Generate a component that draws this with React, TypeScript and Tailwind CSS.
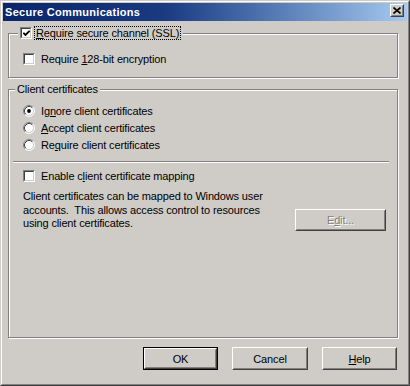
import React from "react";

const face = "font-['Liberation_Sans',Arial,sans-serif] text-[11px] tracking-[-0.15px] leading-[14px] text-black";

function U({ children }: { children: React.ReactNode }) {
  return <span className="underline decoration-1 underline-offset-[1px]">{children}</span>;
}

function CheckBox({ checked }: { checked?: boolean }) {
  return (
    <span className="block w-[12px] h-[12px] shrink-0 border border-t-[#808080] border-l-[#808080] border-r-white border-b-white">
      <span className="flex w-full h-full items-center justify-center bg-white border border-t-[#404040] border-l-[#404040] border-r-[#cfccc8] border-b-[#cfccc8]">
        {checked && (
          <svg width="7" height="7" viewBox="0 0 7 7">
            <polyline points="0.3,2.8 2.5,5 6.7,0.8" fill="none" stroke="#000" strokeWidth="1.9" />
          </svg>
        )}
      </span>
    </span>
  );
}

function Radio({ checked }: { checked?: boolean }) {
  return (
    <svg width="12" height="12" viewBox="0 0 12 12" className="shrink-0">
      <circle cx="6" cy="6" r="5" fill="#fff" />
      <path d="M2.11 9.89 A5.5 5.5 0 0 1 9.89 2.11" fill="none" stroke="#808080" strokeWidth="1" />
      <path d="M9.89 2.11 A5.5 5.5 0 0 1 2.11 9.89" fill="none" stroke="#fff" strokeWidth="1" />
      <path d="M2.82 9.18 A4.5 4.5 0 0 1 9.18 2.82" fill="none" stroke="#404040" strokeWidth="1" />
      <path d="M9.18 2.82 A4.5 4.5 0 0 1 2.82 9.18" fill="none" stroke="#cfccc8" strokeWidth="1" />
      {checked && <circle cx="6" cy="6" r="1.9" fill="#000" />}
    </svg>
  );
}

function Button({ children, isDefault, disabled, className = "" }: { children: React.ReactNode; isDefault?: boolean; disabled?: boolean; className?: string }) {
  const inner = (
    <div className="w-full h-full border border-t-white border-l-white border-r-[#404040] border-b-[#404040]">
      <div className={`w-full h-full flex items-center justify-center border border-t-[#cfccc8] border-l-[#cfccc8] border-r-[#808080] border-b-[#808080] ${disabled ? "text-[#808080] [text-shadow:1px_1px_0_#fff]" : ""}`}>
        {children}
      </div>
    </div>
  );
  return (
    <div className={`${className} ${isDefault ? "border border-black" : ""}`}>{inner}</div>
  );
}

function Row({ children, className = "" }: { children: React.ReactNode; className?: string }) {
  return <div className={`flex items-center gap-[6px] ${className}`}>{children}</div>;
}

export default function App() {
  return (
    <div className={`${face} w-[410px] h-[386px] bg-[#cfccc8] border border-t-[#cfccc8] border-l-[#cfccc8] border-r-[#404040] border-b-[#404040]`}>
      <div className="h-full border border-t-white border-l-white border-r-[#808080] border-b-[#808080] p-[1px] flex flex-col">
        {/* Title bar */}
        <div className="h-[18px] shrink-0 flex items-start bg-gradient-to-r from-[#0a246a] via-[#1a3a82] via-40% to-[#a6caf0]">
          <span className="pl-[2px] mt-[2px] text-white font-bold tracking-[0.3px] leading-[14px] flex-1">Secure Communications</span>
          <div className="mt-[1px] mr-[3px] w-[14px] h-[13px] bg-[#cfccc8] border border-t-white border-l-white border-r-[#404040] border-b-[#404040]">
            <div className="w-full h-full flex items-center justify-center border border-t-[#cfccc8] border-l-[#cfccc8] border-r-[#808080] border-b-[#808080]">
              <svg width="8" height="7" viewBox="0 0 8 7">
                <path d="M0.5 0.5 L7.5 6.5 M7.5 0.5 L0.5 6.5" stroke="#000" strokeWidth="1.6" />
              </svg>
            </div>
          </div>
        </div>

        {/* SSL group */}
        <div className="relative mt-[12px] ml-[5px] w-[390px] border border-[#808080] shadow-[1px_1px_0_#fff,inset_1px_1px_0_#fff] pt-[18px] pb-[11px] pl-[14px]">
          <div className="absolute left-[9px] -top-[8px] px-[2px] bg-[#cfccc8] flex items-center gap-[2px] h-[14px]">
            <CheckBox checked />
            <span className="border border-dotted border-black px-[1px] leading-[12px]">
              <U>R</U>equire secure channel (SSL)
            </span>
          </div>
          <Row className="h-[14px]">
            <CheckBox />
            <span>
              Require <U>1</U>28-bit encryption
            </span>
          </Row>
        </div>

        {/* Client certificates group */}
        <div className="relative flex-1 mt-[11px] ml-[5px] w-[390px] border border-[#808080] shadow-[1px_1px_0_#fff,inset_1px_1px_0_#fff] pt-[12px]">
          <div className="absolute left-[6px] -top-[8px] px-[2px] bg-[#cfccc8] h-[14px]">Client certificates</div>
          <div className="pl-[14px]">
            <Row className="h-[17px]">
              <Radio checked />
              <span>
                Ig<U>n</U>ore client certificates
              </span>
            </Row>
            <Row className="h-[17px]">
              <Radio />
              <span>
                <U>A</U>ccept client certificates
              </span>
            </Row>
            <Row className="h-[17px]">
              <Radio />
              <span>
                Re<U>q</U>uire client certificates
              </span>
            </Row>
          </div>
          <div className="mt-[8px] ml-[4px] mr-[8px] h-[2px] border-t border-t-[#808080] border-b border-b-white" />
          <Row className="h-[14px] mt-[6px] pl-[14px]">
            <CheckBox />
            <span>
              Enable c<U>l</U>ient certificate mapping
            </span>
          </Row>
          <div className="mt-[7px] pl-[14px] pr-[11px] flex items-end justify-between">
            <p className="leading-[13.5px] w-[250px]">
              Client certificates can be mapped to Windows user accounts.&nbsp; This allows access control to resources using client certificates.
            </p>
            <Button disabled className="w-[91px] h-[22px]">
              <span>
                E<U>d</U>it...
              </span>
            </Button>
          </div>
        </div>

        {/* Dialog buttons */}
        <div className="mt-[9px] mb-[13px] h-[23px] shrink-0 flex justify-end gap-[14px] pr-[10px]">
          <Button isDefault className="w-[75px] h-[23px]">OK</Button>
          <Button className="w-[76px] h-[23px]">Cancel</Button>
          <Button className="w-[75px] h-[23px]">
            <span>
              <U>H</U>elp
            </span>
          </Button>
        </div>
      </div>
    </div>
  );
}
